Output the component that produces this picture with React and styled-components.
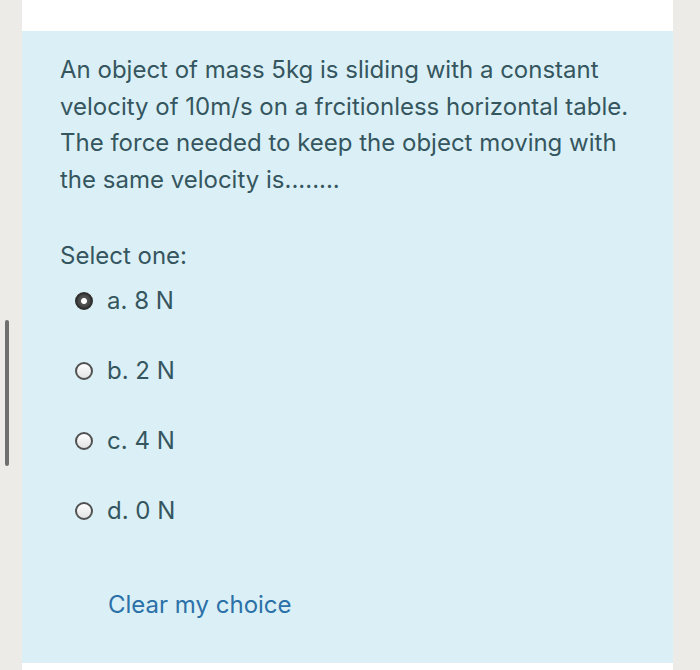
import React, { useState } from 'react';
import styled, { createGlobalStyle } from 'styled-components';

const GlobalStyle = createGlobalStyle`
  html, body {
    margin: 0;
    padding: 0;
    background: #ecebe8;
  }
  body {
    font-family: Inter, "Open Sans", Arial, sans-serif;
  }
`;

const Page = styled.div`
  display: flex;
  height: 670px;
  overflow: hidden;
`;

const Gutter = styled.div`
  width: 22px;
  flex-shrink: 0;
  display: flex;
  justify-content: flex-start;
  padding-left: 5px;
  box-sizing: border-box;
`;

const ScrollThumb = styled.div`
  width: 4px;
  height: 146px;
  margin-top: 320px;
  border-radius: 2px;
  background: #6f6f6f;
`;

const Card = styled.div`
  width: 651px;
  flex-shrink: 0;
  background: #ffffff;
  padding-top: 31px;
`;

const Question = styled.div`
  background: #dbf0f6;
  height: 632px;
  padding: 21px 30px 0 38px;
  box-sizing: border-box;
`;

const Prompt = styled.p`
  margin: 0;
  font-size: 24px;
  line-height: 36.5px;
  color: #35565f;
`;

const SelectLabel = styled.div`
  margin-top: 43px;
  font-size: 24px;
  line-height: 30px;
  color: #35565f;
`;

const Options = styled.div`
  display: flex;
  flex-direction: column;
  gap: 47px;
  margin-top: 18px;
  padding-left: 15px;
`;

const Option = styled.label`
  display: flex;
  align-items: center;
  gap: 14px;
  height: 23px;
  font-size: 24px;
  color: #35565f;
  cursor: pointer;
`;

const Radio = styled.span`
  width: 18px;
  height: 18px;
  border-radius: 50%;
  box-sizing: border-box;
  border: 2px solid ${(p) => (p.$checked ? '#2f2f2f' : '#505050')};
  background: ${(p) =>
    p.$checked
      ? 'radial-gradient(circle, #ffffff 0 2.5px, #555 3.5px, #2a2a2a 100%)'
      : 'linear-gradient(#ffffff, #e2e2e2)'};
  flex-shrink: 0;
`;

const ClearLink = styled.a`
  display: inline-block;
  margin-top: 68px;
  margin-left: 48px;
  font-size: 24px;
  color: #2b70a8;
  text-decoration: none;
  cursor: pointer;
`;

const options = [
  { key: 'a', text: 'a. 8 N' },
  { key: 'b', text: 'b. 2 N' },
  { key: 'c', text: 'c. 4 N' },
  { key: 'd', text: 'd. 0 N' },
];

export default function App() {
  const [choice, setChoice] = useState('a');

  return (
    <>
      <GlobalStyle />
      <Page>
        <Gutter>
          <ScrollThumb />
        </Gutter>
        <Card>
          <Question>
            <Prompt>
              An object of mass 5kg is sliding with a constant
              <br />
              velocity of 10m/s on a frcitionless horizontal table.
              <br />
              The force needed to keep the object moving with
              <br />
              the same velocity is........
            </Prompt>
            <SelectLabel>Select one:</SelectLabel>
            <Options>
              {options.map((o) => (
                <Option key={o.key} onClick={() => setChoice(o.key)}>
                  <Radio $checked={choice === o.key} />
                  {o.text}
                </Option>
              ))}
            </Options>
            <ClearLink onClick={() => setChoice(null)}>Clear my choice</ClearLink>
          </Question>
        </Card>
      </Page>
    </>
  );
}
